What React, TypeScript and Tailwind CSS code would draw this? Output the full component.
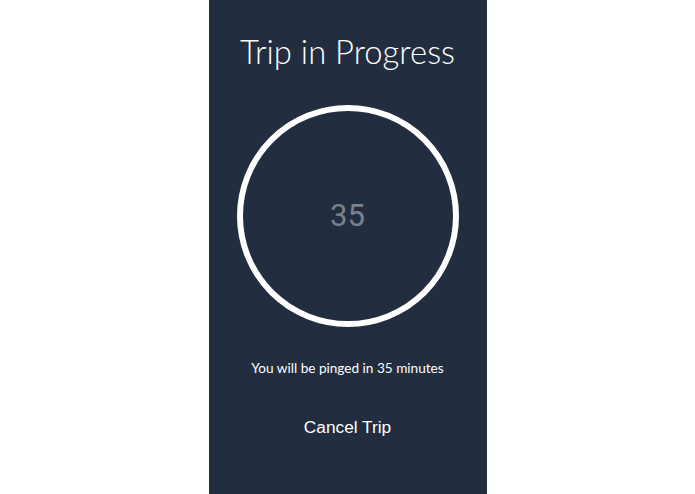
import React from 'react';

export default function App() {
  return (
    <div className="flex h-[494px] w-full justify-center bg-white">
      <div className="flex h-full w-[278px] flex-col items-center bg-[#222e3f] text-white">
        <h1 className="mt-[32px] h-[40px] text-[32.8px] leading-[40px] font-light font-['Lato',sans-serif]">
          Trip in Progress
        </h1>
        <div className="mt-[33px] flex h-[222px] w-[222px] items-center justify-center rounded-full border-[6px] border-white">
          <span className="text-[31px] text-[#7b8089] font-['Roboto',sans-serif]">35</span>
        </div>
        <p className="mt-[31px] h-[20px] text-[13.6px] leading-[20px] font-['Lato',sans-serif]">
          You will be pinged in 35 minutes
        </p>
        <button className="mt-[37px] h-[24px] text-[17.3px] leading-[24px] font-['Liberation_Sans',sans-serif]">
          Cancel Trip
        </button>
      </div>
    </div>
  );
}
